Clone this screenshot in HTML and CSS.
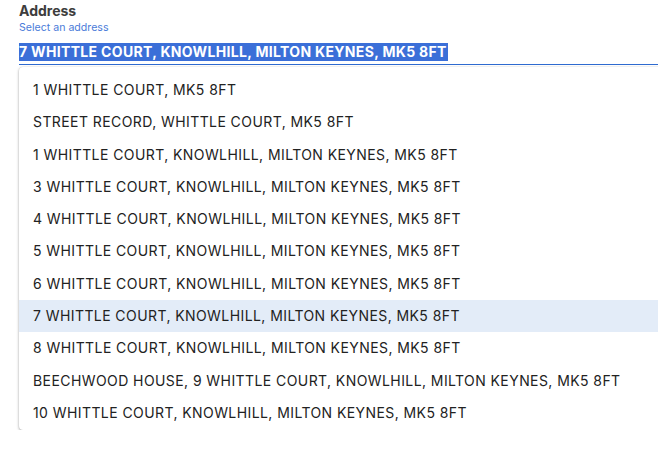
FILE: index.html
```html
<!DOCTYPE html>
<html lang="en">
<head>
<meta charset="utf-8">
<title>Address</title>
<link rel="stylesheet" href="styles.css">
</head>
<body>
<div class="field">
  <div class="label">Address</div>
  <div class="hint">Select an address</div>
  <div class="input"><span class="selected">7 WHITTLE COURT, KNOWLHILL, MILTON KEYNES, MK5 8FT</span></div>
  <ul class="menu">
    <li>1 WHITTLE COURT, MK5 8FT</li>
    <li>STREET RECORD, WHITTLE COURT, MK5 8FT</li>
    <li>1 WHITTLE COURT, KNOWLHILL, MILTON KEYNES, MK5 8FT</li>
    <li>3 WHITTLE COURT, KNOWLHILL, MILTON KEYNES, MK5 8FT</li>
    <li>4 WHITTLE COURT, KNOWLHILL, MILTON KEYNES, MK5 8FT</li>
    <li>5 WHITTLE COURT, KNOWLHILL, MILTON KEYNES, MK5 8FT</li>
    <li>6 WHITTLE COURT, KNOWLHILL, MILTON KEYNES, MK5 8FT</li>
    <li class="active">7 WHITTLE COURT, KNOWLHILL, MILTON KEYNES, MK5 8FT</li>
    <li>8 WHITTLE COURT, KNOWLHILL, MILTON KEYNES, MK5 8FT</li>
    <li>BEECHWOOD HOUSE, 9 WHITTLE COURT, KNOWLHILL, MILTON KEYNES, MK5 8FT</li>
    <li>10 WHITTLE COURT, KNOWLHILL, MILTON KEYNES, MK5 8FT</li>
  </ul>
</div>
</body>
</html>
```
FILE: styles.css
```css
html, body {
  margin: 0;
  padding: 0;
  overflow: hidden;
  background: #ffffff;
}
body {
  font-family: "Inter", "Liberation Sans", sans-serif;
  color: #222222;
}
.field {
  padding: 2px 0 0 19px;
}
.label {
  font-weight: 700;
  font-size: 14px;
  line-height: 18px;
  color: #3d3d3d;
}
.hint {
  font-size: 10.6px;
  line-height: 14px;
  color: #4a7bd9;
  margin-top: 1px;
}
.input {
  width: 639px;
  border-bottom: 1px solid #2f6bd0;
  padding: 8px 0 4px;
  line-height: 17px;
}
.selected {
  background: #3b6fd8;
  color: #ffffff;
  font-weight: 700;
  font-size: 14px;
  letter-spacing: 0.33px;
  padding: 0 1px 1px 0;
}
.menu {
  list-style: none;
  margin: 2px 0 0 0;
  padding: 7px 0 1px;
  width: 700px;
  background: #ffffff;
  border-radius: 4px;
  box-shadow: 0 1px 3px rgba(0, 0, 0, 0.35), 0 0 1px rgba(0, 0, 0, 0.15);
}
.menu li {
  height: 32.3px;
  line-height: 32.3px;
  padding-left: 14px;
  font-size: 14px;
  letter-spacing: 0.42px;
  color: #222222;
  white-space: nowrap;
}
.menu li.active {
  background: #e3ecf8;
}
```
